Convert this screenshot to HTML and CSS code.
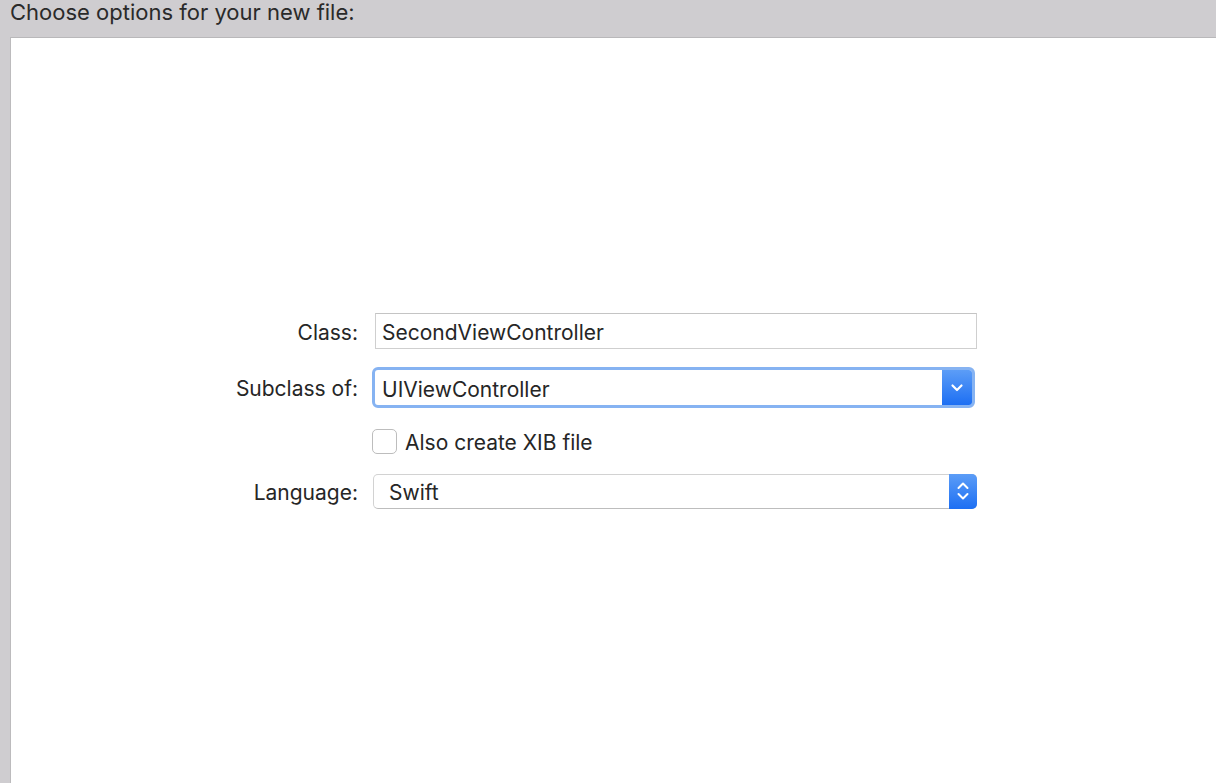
FILE: index.html
```html
<!DOCTYPE html>
<html>
<head>
<meta charset="utf-8">
<link rel="stylesheet" href="styles.css">
</head>
<body>
<div class="sheet">
  <div class="title">Choose options for your new file:</div>
  <div class="panel">
    <div class="form">
      <div class="label row1">Class:</div>
      <div class="field row1"><div class="textfield">SecondViewController</div></div>

      <div class="label row2">Subclass of:</div>
      <div class="field row2">
        <div class="popup focused">
          <span class="popup-text">UIViewController</span>
          <span class="popup-btn down">
            <svg width="16" height="12" viewBox="0 0 16 12"><path d="M3.5 3.5 L8 8 L12.5 3.5" fill="none" stroke="#fff" stroke-width="2.2" stroke-linecap="round" stroke-linejoin="round"/></svg>
          </span>
        </div>
      </div>

      <div class="label row3"></div>
      <div class="field row3">
        <label class="check"><span class="box"></span><span>Also create XIB file</span></label>
      </div>

      <div class="label row4">Language:</div>
      <div class="field row4">
        <div class="popup lang">
          <span class="popup-text swift">Swift</span>
          <span class="popup-btn stepper">
            <svg width="16" height="24" viewBox="0 0 16 24"><path d="M3.5 9 L8 4.5 L12.5 9 M3.5 15 L8 19.5 L12.5 15" fill="none" stroke="#fff" stroke-width="2" stroke-linecap="round" stroke-linejoin="round"/></svg>
          </span>
        </div>
      </div>
    </div>
  </div>
</div>
</body>
</html>
```

FILE: styles.css
```css
html, body {
  margin: 0;
  padding: 0;
  height: 100%;
  overflow: hidden;
}
body {
  background: #cfcdd0;
  font-family: "Inter", "Liberation Sans", sans-serif;
  color: #262626;
}
.sheet {
  display: flex;
  flex-direction: column;
  height: 100%;
}
.title {
  height: 37px;
  padding-left: 10px;
  font-size: 22px;
  line-height: 24px;
  color: #2a2a2a;
}
.panel {
  flex: 1;
  margin-left: 10px;
  margin-right: -10px;
  background: #ffffff;
  border-top: 1px solid #b9b8ba;
  border-left: 1px solid #bcbbbd;
}
.form {
  margin-top: 266px;
  display: grid;
  grid-template-columns: 347px 605px;
  grid-template-rows: 54px 58px 50px 50px;
  column-gap: 14px;
  font-size: 21px;
}
.label {
  display: flex;
  align-items: center;
  justify-content: flex-end;
  color: #262626;
  padding-top: 3px;
}
.field {
  display: flex;
  align-items: center;
}
.textfield {
  box-sizing: border-box;
  margin-left: 3px;
  width: 602px;
  height: 36px;
  border: 1px solid #cfcfcf;
  border-top-color: #c4c4c4;
  padding-left: 6px;
  padding-top: 3px;
  display: flex;
  align-items: center;
  background: #fff;
}
.popup {
  box-sizing: border-box;
  display: flex;
  align-items: stretch;
  background: #fff;
}
.popup.focused {
  width: 603px;
  height: 41px;
  border: 3px solid #86b3f2;
  border-radius: 6px;
  margin-top: 1px;
}
.popup.focused .popup-text {
  padding-left: 7px;
  padding-top: 3px;
}
.popup-text {
  flex: 1;
  display: flex;
  align-items: center;
}
.popup-btn {
  display: flex;
  align-items: center;
  justify-content: center;
  background: linear-gradient(#5c9df7, #1d6ff3);
}
.popup-btn.down {
  width: 30px;
  border-radius: 0 3px 3px 0;
}
.popup.lang {
  margin-left: 1px;
  width: 604px;
  height: 35px;
  border: 1px solid #d2d2d2;
  border-bottom-color: #bdbdbd;
  border-radius: 5px;
}
.popup-text.swift {
  padding-left: 15px;
  padding-top: 3px;
}
.popup-btn.stepper {
  width: 28px;
  margin: -1px -1px -1px 0;
  border-radius: 0 5px 5px 0;
}
.check {
  display: flex;
  align-items: center;
  gap: 8px;
}
.check span:last-child {
  padding-top: 2px;
}
.box {
  box-sizing: border-box;
  width: 25px;
  height: 25px;
  border: 1px solid #bdbdbd;
  border-radius: 5px;
  background: #fff;
}
```
